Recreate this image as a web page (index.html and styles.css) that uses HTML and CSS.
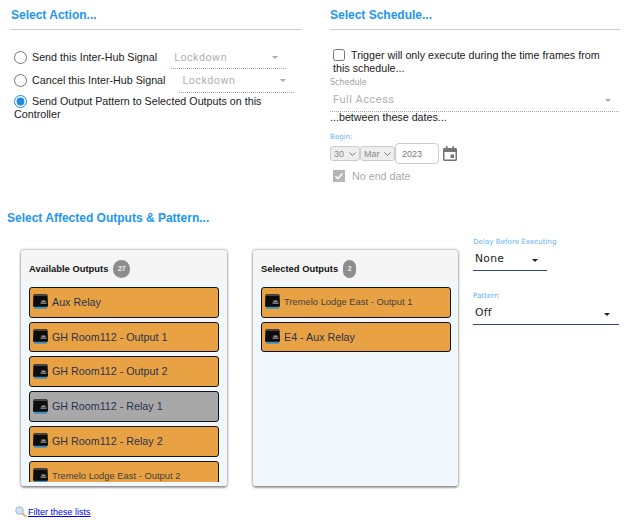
FILE: index.html
```html
<!DOCTYPE html>
<html lang="en">
<head>
    <meta charset="UTF-8">
    <meta name="viewport" content="width=device-width, initial-scale=1.0">
    <title>Edit Trigger</title>
    <link rel="stylesheet" href="styles.css">
</head>
<body>
    <svg class="defs" width="0" height="0">
        <symbol id="device" viewBox="0 0 15 15">
            <path d="M1 11h13v2.800c0 .6-.4 1-1 1H2c-.6 0-1-.4-1-1z" fill="#3f8fbd"/>
            <path d="M2 .3h11c.8 0 1.500.6 1.600 1.400l.4 10c0 .6-.4 1-1 1H1c-.6 0-1-.4-1-1l.4-10C.5.900 1.200.3 2 .3z" fill="#0c0c0c"/>
            <path d="M2 .3h11c.8 0 1.500.6 1.600 1.400v.2H.4v-.2C.5.900 1.200.3 2 .3z" fill="#4a4642"/>
            <path d="M8.500 6.500h4V8h-4zM7.500 8.500h6v1.200h-6z" fill="#9a9a9a"/>
        </symbol>
    </svg>

    <div class="top">
        <section class="col">
            <h3 class="title">Select Action...</h3>
            <div class="action-list">
                <div class="action-row">
                    <label class="radio"><input type="radio" name="action">Send this Inter-Hub Signal</label>
                    <div class="pick pick-dotted pick-signal">Lockdown<span class="caret"></span></div>
                </div>
                <div class="action-row">
                    <label class="radio"><input type="radio" name="action">Cancel this Inter-Hub Signal</label>
                    <div class="pick pick-dotted pick-signal pick-signal-low">Lockdown<span class="caret"></span></div>
                </div>
                <label class="radio radio-wrap"><input type="radio" name="action" checked>Send Output Pattern to Selected Outputs on this Controller</label>
            </div>
        </section>

        <section class="col">
            <h3 class="title">Select Schedule...</h3>
            <div class="schedule">
                <label class="check-label"><input type="checkbox">Trigger will only execute during the time frames from this schedule...</label>
                <div class="field-label field-label-gray">Schedule</div>
                <div class="pick pick-dotted pick-wide">Full Access<span class="caret"></span></div>
                <div class="between">...between these dates...</div>
                <div class="field-label begin-label">Begin:</div>
                <div class="date-row">
                    <div class="date-select date-day">30<svg class="chev" width="7" height="4" viewBox="0 0 7 4"><path d="M.5.5l3 3 3-3" fill="none" stroke="#777"/></svg></div>
                    <div class="date-select date-month">Mar<svg class="chev" width="7" height="4" viewBox="0 0 7 4"><path d="M.5.5l3 3 3-3" fill="none" stroke="#777"/></svg></div>
                    <input class="date-year" type="text" value="2023">
                    <svg class="cal" width="14" height="15" viewBox="0 0 14 15">
                        <path d="M3 0h1.500v2h5V0H11v2h1.500c.8 0 1.500.7 1.500 1.500v10c0 .8-.7 1.500-1.500 1.500h-11C.7 15 0 14.300 0 13.500v-10C0 2.700.7 2 1.500 2H3zM1.500 6v7.500h11V6z" fill="#757575"/>
                        <path d="M7.500 8.500h3.500V12H7.500z" fill="#757575"/>
                    </svg>
                </div>
                <label class="no-end"><span class="fake-check"><svg width="12" height="12" viewBox="0 0 12 12"><path d="M2.500 6.200l2.400 2.400 4.600-5" fill="none" stroke="#fff" stroke-width="1.500"/></svg></span>No end date</label>
            </div>
        </section>
    </div>

    <h3 class="title title-outputs">Select Affected Outputs &amp; Pattern...</h3>

    <div class="outputs">
        <div class="card">
            <div class="card-head">Available Outputs<span class="badge">27</span></div>
            <div class="card-body">
                <div class="card-list">
                    <div class="item"><svg class="dev"><use href="#device"/></svg>Aux Relay</div>
                    <div class="item"><svg class="dev"><use href="#device"/></svg>GH Room112 - Output 1</div>
                    <div class="item"><svg class="dev"><use href="#device"/></svg>GH Room112 - Output 2</div>
                    <div class="item item-off"><svg class="dev"><use href="#device"/></svg>GH Room112 - Relay 1</div>
                    <div class="item"><svg class="dev"><use href="#device"/></svg>GH Room112 - Relay 2</div>
                    <div class="item item-small"><svg class="dev"><use href="#device"/></svg>Tremelo Lodge East - Output 2</div>
                </div>
            </div>
        </div>

        <div class="card card-selected">
            <div class="card-head">Selected Outputs<span class="badge badge-narrow">2</span></div>
            <div class="card-body">
                <div class="card-list">
                    <div class="item item-small"><svg class="dev"><use href="#device"/></svg>Tremelo Lodge East - Output 1</div>
                    <div class="item"><svg class="dev"><use href="#device"/></svg>E4 - Aux Relay</div>
                </div>
            </div>
        </div>

        <div class="settings">
            <div class="field-label">Delay Before Executing</div>
            <div class="pick pick-solid pick-delay">None<span class="caret caret-dark"></span></div>
            <div class="field-label pattern-label">Pattern</div>
            <div class="pick pick-solid pick-pattern">Off<span class="caret caret-dark"></span></div>
        </div>
    </div>

    <div class="filter">
        <svg width="12" height="12" viewBox="0 0 12 12">
            <path d="M7 7l4 4" stroke="#e8b27a" stroke-width="2"/>
            <circle cx="4.500" cy="4.500" r="3.800" fill="#cfe3f5" stroke="#9db8cf"/>
        </svg>
        <a href="#">Filter these lists</a>
    </div>
</body>
</html>
```
FILE: styles.css
```css
body {
    font-family: 'Liberation Sans', Arial, sans-serif;
    margin: 0;
    padding: 0;
    font-size: 10.72px;
    color: #212121;
    background-color: #fff;
}

.defs {
    display: block;
    height: 0;
}

.top {
    display: flex;
    gap: 29px;
    padding: 8px 5px 0 11px;
    height: 209px;
    box-sizing: border-box;
}

.col {
    width: 290px;
}

.title {
    margin: 0;
    padding-bottom: 7px;
    font-size: 12px;
    line-height: 14px;
    font-weight: bold;
    color: #2196f3;
    border-bottom: 1px solid #ccc;
}

.title-outputs {
    margin-left: 7px;
    border-bottom: none;
    padding-bottom: 0;
    margin-top: 2px;
    height: 39px;
}

.action-list {
    margin-top: 15px;
    margin-left: 3px;
}

.action-row {
    display: flex;
    align-items: flex-start;
    height: 23px;
}

.radio {
    display: block;
    line-height: 13px;
    margin-top: 6px;
    white-space: nowrap;
}

.radio input {
    width: 13px;
    height: 13px;
    margin: 0 5px 0 0;
    vertical-align: -3px;
    accent-color: #1e88e5;
}

.radio-wrap {
    white-space: normal;
    margin-top: 4px;
}

.pick {
    position: relative;
    font-family: Roboto, sans-serif;
    box-sizing: border-box;
}

.pick-dotted {
    color: #b0b0b0;
    border-bottom: 1px dotted #aaa;
    letter-spacing: 0.5px;
    padding-left: 3px;
}

.pick-signal {
    width: 115px;
    height: 24px;
    line-height: 25px;
    margin-left: 14px;
}

.pick-signal-low {
    height: 25px;
}

.pick-wide {
    width: 289px;
    height: 24px;
    line-height: 24px;
    font-size: 11px;
}

.caret {
    position: absolute;
    right: 8px;
    top: 11px;
    border-left: 3px solid transparent;
    border-right: 3px solid transparent;
    border-top: 3px solid #aaa;
}

.caret-dark {
    border-top-color: #212121;
    right: 9px;
    top: 12px;
}

.schedule {
    margin-top: 19px;
}

.check-label {
    display: block;
    line-height: 13px;
    padding: 0 15px 0 3px;
}

.check-label input {
    width: 12px;
    height: 12px;
    margin: 0 6px 0 0;
    vertical-align: -2px;
}

.field-label {
    font-family: 'DejaVu Sans', sans-serif;
    font-size: 7.150px;
    line-height: 10px;
    color: #64b5f6;
}

.field-label-gray {
    font-size: 8px;
    color: #9e9e9e;
    margin-top: 3px;
}

.between {
    line-height: 13px;
    margin-top: -1px;
}

.begin-label {
    margin-top: 8px;
}

.date-row {
    display: flex;
    align-items: center;
    margin-top: 1px;
    height: 21px;
}

.date-select {
    display: flex;
    align-items: center;
    justify-content: space-between;
    height: 15px;
    box-sizing: border-box;
    padding: 0 3px;
    font-size: 9px;
    color: #888;
    background-color: #eee;
    border: 1px solid #ccc;
    border-radius: 3px;
}

.date-day {
    width: 30px;
}

.date-month {
    width: 35px;
}

.date-year {
    width: 44px;
    height: 21px;
    box-sizing: border-box;
    padding: 0 6px;
    font-family: 'Liberation Sans', sans-serif;
    font-size: 9px;
    color: #777;
    border: 1px solid #ccc;
    border-radius: 4px;
}

.cal {
    margin-left: 4px;
}

.no-end {
    display: flex;
    align-items: center;
    gap: 7px;
    margin: 6px 0 0 3px;
    color: #aaa;
    line-height: 12px;
}

.fake-check {
    width: 12px;
    height: 12px;
    background-color: #b5b5b5;
    display: block;
}

.fake-check svg {
    display: block;
}

.outputs {
    display: flex;
    padding-left: 21px;
    height: 236px;
}

.card {
    width: 206px;
    height: 236px;
    background-color: #f5f5f5;
    border-radius: 3px;
    box-shadow: 0 0 3px rgba(0, 0, 0, 0.5), 0 2px 2px rgba(0, 0, 0, 0.3);
    overflow: hidden;
    margin-right: 26px;
    box-sizing: border-box;
}

.card-selected {
    width: 205px;
    margin-right: 15px;
}

.card-head {
    height: 32px;
    display: flex;
    align-items: center;
    gap: 5px;
    padding: 6px 0 0 8px;
    box-sizing: border-box;
    font-size: 9.380px;
    font-weight: bold;
    color: #111;
}

.badge {
    min-width: 17px;
    height: 18px;
    line-height: 18px;
    border-radius: 9px;
    text-align: center;
    background-color: #8d8d8d;
    color: #eee;
    font-size: 7px;
    font-weight: bold;
}

.badge-narrow {
    min-width: 13px;
}

.card-body {
    height: 204px;
    padding: 5px 8px 4px;
    box-sizing: border-box;
    background-color: #f0f7fd;
}

.card-selected .card-body {
    padding-right: 7px;
}

.card-list {
    height: 195px;
    overflow: hidden;
}

.item {
    display: flex;
    align-items: center;
    height: 30.720px;
    box-sizing: border-box;
    margin-bottom: 4px;
    padding: 0 0 1px 3px;
    gap: 4px;
    background-color: #e8a243;
    border: 1px solid #111;
    border-radius: 3px;
    color: #2a3350;
}

.item-off {
    background-color: #a8a8a8;
}

.item-small {
    font-size: 9.400px;
    color: #43413f;
}

.dev {
    width: 15px;
    height: 15px;
    flex-shrink: 0;
}

.settings {
    width: 146px;
    margin-top: -13px;
}

.pick-solid {
    color: #212121;
    border-bottom: 1px solid #2c4a80;
    letter-spacing: 0.3px;
    padding-left: 2px;
    font-family: 'DejaVu Sans', sans-serif;
    height: 24px;
    line-height: 23px;
}

.pick-delay {
    width: 74px;
}

.pattern-label {
    margin-top: 20px;
}

.filter {
    display: flex;
    align-items: center;
    gap: 1px;
    padding: 20px 0 0 15px;
    font-size: 9px;
}

.filter a {
    color: #0000ee;
}
```
